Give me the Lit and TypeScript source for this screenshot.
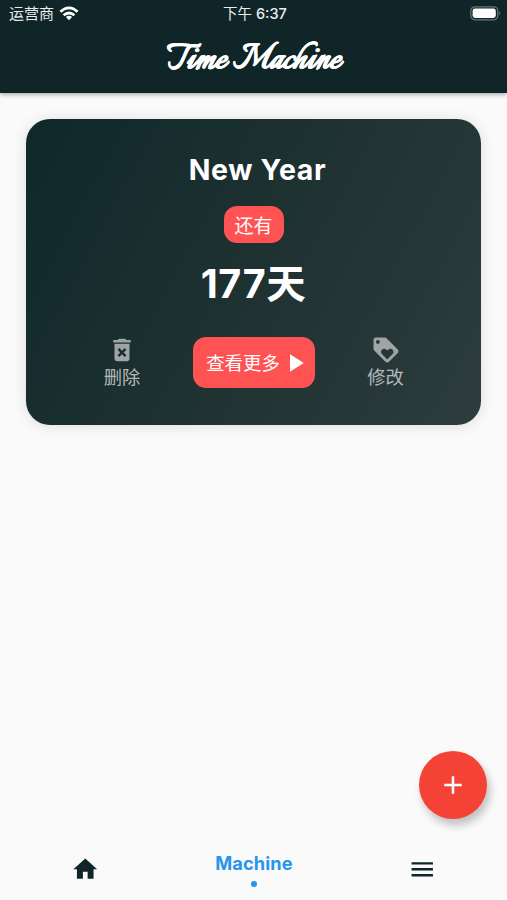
import { LitElement, html, css } from "lit";
import { customElement, property } from "lit/decorators.js";

const ICONS: Record<string, string> = {
  home: "M10 20v-6h4v6h5v-8h3L12 3 2 12h3v8z",
  menu: "M3 18h18v-2H3v2zm0-5h18v-2H3v2zm0-7v2h18V6H3z",
  add: "M19 13h-6v6h-2v-6H5v-2h6V5h2v6h6v2z",
  play: "M8 5v14l11-7z",
  trash:
    "M6 19c0 1.1.9 2 2 2h8c1.1 0 2-.9 2-2V7H6v12zm2.46-7.12l1.41-1.41L12 12.59l2.12-2.12 1.41 1.41L13.41 14l2.12 2.12-1.41 1.41L12 15.41l-2.12 2.12-1.41-1.41L10.59 14l-2.13-2.12zM15.5 4l-1-1h-5l-1 1H5v2h14V4z",
  loyalty:
    "M21.41 11.58l-9-9C12.05 2.22 11.55 2 11 2H4c-1.1 0-2 .9-2 2v7c0 .55.22 1.05.59 1.42l9 9c.36.36.86.58 1.41.58.55 0 1.05-.22 1.41-.59l7-7c.37-.36.59-.86.59-1.41 0-.55-.23-1.06-.59-1.42zM5.5 7C4.67 7 4 6.33 4 5.5S4.67 4 5.5 4 7 4.67 7 5.5 6.33 7 5.5 7zm11.77 8.27L13 19.54l-4.27-4.27C8.28 14.81 8 14.19 8 13.5c0-1.38 1.12-2.5 2.5-2.5.69 0 1.32.28 1.77.74l.73.72.73-.73c.45-.45 1.08-.73 1.77-.73 1.38 0 2.5 1.12 2.5 2.5 0 .69-.28 1.32-.73 1.77z",
};

@customElement("md-icon")
export class MdIcon extends LitElement {
  @property() name = "home";
  static styles = css`
    :host { display: block; width: 30px; height: 30px; }
    svg { display: block; width: 100%; height: 100%; fill: currentColor; }
  `;
  render() {
    return html`<svg viewBox="0 0 24 24"><path d=${ICONS[this.name]}></path></svg>`;
  }
}

@customElement("app-root")
export class AppRoot extends LitElement {
  static styles = css`
    :host {
      display: flex;
      flex-direction: column;
      position: relative;
      height: 900px;
      overflow: hidden;
      background: #fafafa;
      font-family: Inter, "Noto Sans CJK SC", sans-serif;
    }
    * { box-sizing: border-box; }
    header {
      height: 93px;
      flex: none;
      background: #0f2528;
      color: #fff;
      box-shadow: 0 1px 5px rgba(0, 0, 0, 0.4);
    }
    .status {
      display: grid;
      grid-template-columns: 1fr auto 1fr;
      align-items: center;
      height: 27px;
      padding: 0 6px 0 9px;
      font-size: 15px;
      line-height: 27px;
      color: #e8eeee;
    }
    .carrier { display: flex; align-items: center; gap: 5px; }
    .clock { font-size: 14.5px; font-weight: 500; }
    .clock span { font-weight: 400; }
    .battery { justify-self: end; }
    .wifi, .battery { display: block; }
    .title {
      margin: 0;
      padding-left: 1px;
      height: 62px;
      text-align: center;
      white-space: nowrap;
      font: 700 44px/67px "Italianno", "Great Vibes", "Liberation Serif", cursive;
      -webkit-text-stroke: 0.3px #fff;
    }
    main { flex: 1; padding: 26px 26px 25px; }
    .card {
      height: 306px;
      border-radius: 24px;
      background: linear-gradient(118deg, #0f282b 0%, #1e3131 48%, #2e3c3e 100%);
      box-shadow: 0 1px 14px rgba(0, 0, 0, 0.12);
      color: #fff;
      display: flex;
      flex-direction: column;
      align-items: center;
      padding-top: 32px;
    }
    .name { margin: 0 0 0 8px; font-size: 28.5px; line-height: 38px; font-weight: 700; letter-spacing: 0.65px; }
    .chip {
      margin-top: 17px;
      width: 60px;
      height: 37px;
      border-radius: 13px;
      background: #ff5252;
      font-size: 19px;
      line-height: 41px;
      text-align: center;
    }
    .days { margin-top: 14px; font-size: 39.5px; line-height: 54px; font-weight: 700; letter-spacing: 0.6px; }
    .actions {
      align-self: stretch;
      margin-top: 26px;
      padding: 0 56px;
      display: grid;
      grid-template-columns: 80px 1fr 80px;
      justify-items: center;
    }
    .action { display: flex; flex-direction: column; align-items: center; color: #9fa4a4; }
    .action span { font-size: 18.3px; line-height: 25px; color: #b4baba; }
    .action md-icon { margin-top: -2px; }
    .edit { padding-left: 1px; }
    .more {
      display: flex;
      align-items: center;
      justify-content: center;
      width: 122px;
      height: 51px;
      border-radius: 13px;
      background: #ff5252;
      font-size: 18.4px;
      line-height: 26px;
      padding: 0 0 0 9px;
    }
    nav {
      height: 60px;
      flex: none;
      display: grid;
      grid-template-columns: repeat(3, 1fr);
      justify-items: center;
      align-items: center;
      padding: 0 0 2px 1px;
      color: #0f2528;
    }
    nav md-icon { width: 28.5px; height: 28.5px; }
    .current {
      display: flex;
      flex-direction: column;
      align-items: center;
      gap: 6px;
      color: #2695ee;
      font-size: 18.2px;
      line-height: 24px;
      font-weight: 700;
      letter-spacing: 0.1px;
      margin-top: -1px;
    }
    .dot { width: 6px; height: 6px; border-radius: 50%; background: #2196f3; }
    .fab {
      position: absolute;
      right: 20px;
      bottom: 81px;
      width: 68px;
      height: 68px;
      border-radius: 50%;
      display: flex;
      align-items: center;
      justify-content: center;
      background: #f44336;
      color: #fff;
      box-shadow: 3px 6px 9px rgba(0, 0, 0, 0.24);
    }
  `;

  render() {
    return html`
      <header>
        <div class="status">
          <div class="carrier">
            <span>运营商</span>
            <svg class="wifi" width="20" height="15" viewBox="0 0 20 15">
              <g fill="none" stroke="#fff" stroke-width="2.8">
                <path d="M1.4 5.8Q10 -2 18.6 5.8"></path>
                <path d="M4.6 9.3Q10 4.6 15.4 9.3"></path>
              </g>
              <path fill="#fff" d="M10 14.3L6.9 11.1Q10 8.5 13.1 11.1z"></path>
            </svg>
          </div>
          <div class="clock"><span>下午</span> 6:37</div>
          <svg class="battery" width="31" height="15" viewBox="0 0 31 15">
            <rect x="0.8" y="0.8" width="27" height="13" rx="4" fill="none" stroke="#65777a" stroke-width="1.2"></rect>
            <rect x="2.6" y="2.6" width="23.2" height="9.4" rx="2.4" fill="#fff"></rect>
            <path d="M29.1 5.2q2 2.1 0 4.2z" fill="#65777a"></path>
          </svg>
        </div>
        <h1 class="title">Time Machine</h1>
      </header>
      <main>
        <section class="card">
          <h2 class="name">New Year</h2>
          <div class="chip">还有</div>
          <div class="days">177天</div>
          <div class="actions">
            <div class="action"><md-icon name="trash"></md-icon><span>删除</span></div>
            <div class="more">查看更多<md-icon name="play"></md-icon></div>
            <div class="action edit"><md-icon name="loyalty"></md-icon><span>修改</span></div>
          </div>
        </section>
      </main>
      <nav>
        <md-icon name="home"></md-icon>
        <div class="current"><span>Machine</span><i class="dot"></i></div>
        <md-icon name="menu"></md-icon>
      </nav>
      <div class="fab"><md-icon name="add"></md-icon></div>
    `;
  }
}
